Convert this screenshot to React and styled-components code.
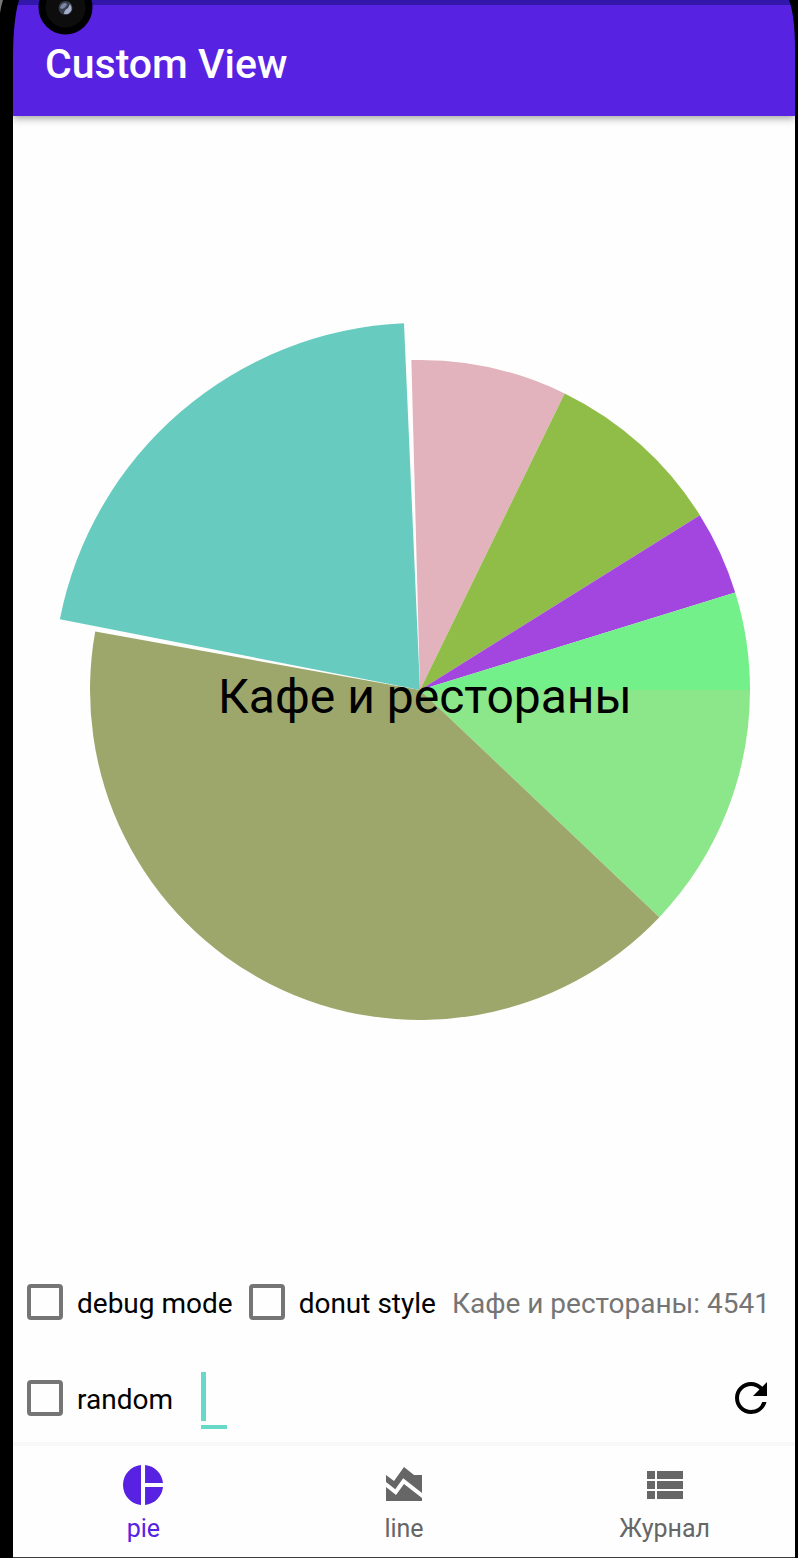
import React from "react";
import styled, { createGlobalStyle } from "styled-components";

const GlobalStyle = createGlobalStyle`
  *, *::before, *::after { box-sizing: border-box; }
  body {
    margin: 0;
    background: #000;
    font-family: Roboto, "Noto Sans", sans-serif;
    color: #000;
  }
`;

const Device = styled.div`
  position: relative;
  display: flex;
  min-height: 100vh;
  padding: 0 3px 0 13px;
  background: #000;
`;

const Bezel = styled.svg`
  position: absolute;
  top: 0;
  left: ${(p) => (p.$side === "left" ? "0" : "auto")};
  right: ${(p) => (p.$side === "right" ? "0" : "auto")};
`;

const Screen = styled.div`
  flex: 1;
  min-width: 0;
  display: flex;
  flex-direction: column;
  border-bottom: 1px solid #3c3c3c;
  background: #fefefe;
`;

const AppBar = styled.header`
  display: flex;
  align-items: center;
  height: 116px;
  padding: 6px 32px 0;
  border-top: 5px solid #3217aa;
  background: #5722e2;
  box-shadow: 0 2px 8px rgba(0, 0, 0, 0.4);
`;

const Title = styled.h1`
  margin: 0;
  font-size: 41px;
  line-height: 48px;
  font-weight: 500;
  color: #fff;
`;

const ChartArea = styled.main`
  flex: 1;
  display: flex;
  align-items: center;
`;

const Chart = styled.svg`
  display: block;
  width: 100%;
  height: auto;
`;

const ChartLabel = styled.text`
  font-size: 48px;
  fill: #000;
`;

const ControlRow = styled.div`
  display: flex;
  align-items: center;
  height: 96px;
  padding: 0 24px 0 14px;
  font-size: 28px;
  line-height: 36px;
  white-space: nowrap;
`;

const CheckLabel = styled.label`
  display: flex;
  align-items: center;
  gap: 14px;
  margin-right: 16px;
`;

const LabelText = styled.span`
  padding-top: 4px;
`;

const Checkbox = styled.input.attrs({ type: "checkbox" })`
  appearance: none;
  flex: none;
  width: 36px;
  height: 36px;
  margin: 0;
  border: 4px solid #757575;
  border-radius: 4px;
  background: transparent;
  &:checked { background: #757575; }
`;

const Summary = styled.output`
  padding-top: 4px;
  color: #757575;
`;

const Field = styled.div`
  position: relative;
  height: 57px;
  margin: 4px 0 0 12px;
  &::before {
    content: "";
    position: absolute;
    top: 0;
    left: 0;
    width: 5px;
    height: 49px;
    background: #66d9c8;
  }
`;

const TextInput = styled.input`
  display: block;
  width: 26px;
  height: 57px;
  padding: 0;
  border: 0;
  border-bottom: 4px solid #66d9c8;
  outline: none;
  background: transparent;
  font: inherit;
  caret-color: transparent;
`;

const IconButton = styled.button`
  display: flex;
  margin: 0 -4px 0 auto;
  padding: 0;
  border: 0;
  background: none;
  color: #000;
`;

const Icon = styled.svg.attrs({ viewBox: "0 0 24 24", "aria-hidden": true })`
  display: block;
  width: 48px;
  height: 48px;
  fill: currentColor;
`;

const BottomNav = styled.nav`
  display: flex;
  height: 111px;
  background: #fefefe;
  box-shadow: 0 -4px 0 #f8f8f8;
`;

const NavItem = styled.a`
  flex: 1 1 0;
  display: flex;
  flex-direction: column;
  align-items: center;
  gap: 4px;
  padding-top: 15px;
  font-size: 25px;
  line-height: 32px;
  text-decoration: none;
  color: ${(p) => (p.$active ? "#5722e2" : "#666")};
`;

const CENTER = { x: 407, y: 396 };

const slices = [
  { from: 0, to: 43.5, r: 330, color: "#8ce68a" },
  { from: 43.5, to: 190.2, r: 330, color: "#9ea76b" },
  { from: 191.1, to: 267.5, r: 367, color: "#67cbbf" },
  { from: 268.5, to: 296, r: 330, color: "#e2b3bd" },
  { from: 296, to: 328, r: 330, color: "#90bc48" },
  { from: 328, to: 342.8, r: 330, color: "#a345df" },
  { from: 342.8, to: 360, r: 330, color: "#73f089" },
];

const point = (deg, r) => {
  const a = (deg * Math.PI) / 180;
  return `${(CENTER.x + r * Math.cos(a)).toFixed(2)} ${(CENTER.y + r * Math.sin(a)).toFixed(2)}`;
};

const slicePath = ({ from, to, r }) =>
  `M${CENTER.x} ${CENTER.y}L${point(from, r)}A${r} ${r} 0 0 1 ${point(to, r)}Z`;

const tabs = [
  {
    label: "pie",
    active: true,
    path: "M11 2v20c-5.07-.5-9-4.79-9-10s3.93-9.5 9-10zm2.03 0v8.99H22c-.47-4.74-4.24-8.52-8.97-8.99zm0 11.01V22c4.74-.47 8.5-4.25 8.97-8.99h-8.97z",
  },
  {
    label: "line",
    path: "M3 13v7h18v-1.5l-9-7L8 17l-5-4zM3 7l4 3 5-7 5 4h4v8.97l-9.4-7.31-3.98 5.48L3 10.44V7z",
  },
  {
    label: "Журнал",
    path: "M3 14h4v-4H3v4zm0 5h4v-4H3v4zM3 9h4V5H3v4zm5 5h13v-4H8v4zm0 5h13v-4H8v4zM8 5v4h13V5H8z",
  },
];

const CheckOption = ({ children }) => (
  <CheckLabel>
    <Checkbox />
    <LabelText>{children}</LabelText>
  </CheckLabel>
);

export default function App() {
  return (
    <>
      <GlobalStyle />
      <Device>
        <Screen>
          <AppBar>
            <Title>Custom View</Title>
          </AppBar>
          <ChartArea>
            <Chart viewBox="0 0 782 782" role="img" aria-label="Кафе и рестораны">
              {slices.map((s) => (
                <path key={s.from} d={slicePath(s)} fill={s.color} />
              ))}
              <ChartLabel x="205" y="419">Кафе и рестораны</ChartLabel>
            </Chart>
          </ChartArea>
          <ControlRow>
            <CheckOption>debug mode</CheckOption>
            <CheckOption>donut style</CheckOption>
            <Summary>Кафе и рестораны: 4541</Summary>
          </ControlRow>
          <ControlRow>
            <CheckOption>random</CheckOption>
            <Field>
              <TextInput type="text" aria-label="Value" />
            </Field>
            <IconButton type="button" aria-label="Refresh">
              <Icon>
                <path d="M17.65 6.35A7.958 7.958 0 0 0 12 4c-4.42 0-7.99 3.58-7.99 8s3.57 8 7.99 8c3.73 0 6.84-2.55 7.73-6h-2.08A5.99 5.99 0 0 1 12 18c-3.31 0-6-2.69-6-6s2.69-6 6-6c1.66 0 3.14.69 4.22 1.78L13 11h7V4l-2.35 2.35z" />
              </Icon>
            </IconButton>
          </ControlRow>
          <BottomNav>
            {tabs.map((t) => (
              <NavItem key={t.label} href="#" $active={t.active}>
                <Icon><path d={t.path} /></Icon>
                {t.label}
              </NavItem>
            ))}
          </BottomNav>
        </Screen>
        <Bezel $side="left" width="100" height="60" viewBox="0 0 100 60" aria-hidden="true">
          <path d="M0 0H19Q13 20 13 60H0Z" fill="#000" />
          <path d="M0 0H3Q1 6 0 13Z" fill="#777" />
          <circle cx="65.500" cy="7.500" r="27" fill="#000" />
          <circle cx="65.500" cy="7.500" r="20" fill="#0d0d0d" />
          <circle cx="65.500" cy="8" r="7" fill="#3a3f50" />
          <path d="M70 4Q74 10 68 14L64 14Q64 10 68 8Z" fill="#a3aecb" />
          <path d="M60 8Q61 3 66 3L67 5Q65 8 62 9Z" fill="#7d87a3" />
        </Bezel>
        <Bezel $side="right" width="12" height="60" viewBox="0 0 12 60" aria-hidden="true">
          <path d="M12 0H3Q9 16 9 50V60H12Z" fill="#000" />
        </Bezel>
      </Device>
    </>
  );
}
